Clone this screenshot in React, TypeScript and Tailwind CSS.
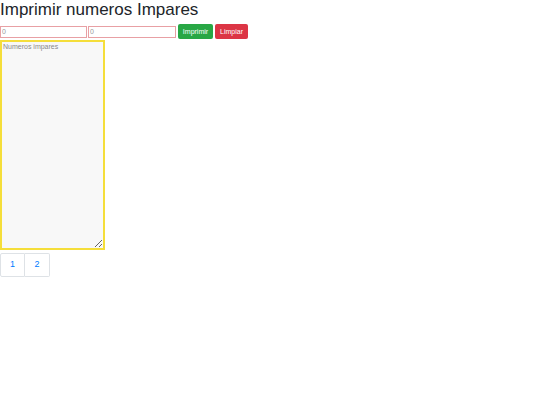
export default function App() {
  return (
    <div className="bg-white min-h-[405px] text-[#212529]" style={{ fontFamily: '"Liberation Sans", Arial, sans-serif' }}>
      <h1 className="text-[17px] leading-[20px] font-normal m-0 mb-[4px]">Imprimir numeros Impares</h1>
      <div className="flex items-center h-[15px]">
        <input
          placeholder="0"
          className="w-[87px] h-[12px] border border-[#e8a0a4] bg-white text-[7px] px-[1px] outline-none placeholder:text-[#999]"
        />
        <input
          placeholder="0"
          className="ml-[1px] w-[88px] h-[12px] border border-[#e8a0a4] bg-white text-[7px] px-[1px] outline-none placeholder:text-[#999]"
        />
        <button className="ml-[2px] w-[35px] h-[15px] rounded-[2px] bg-[#28a745] text-white text-[7px] leading-none">Imprimir</button>
        <button className="ml-[2px] w-[33px] h-[15px] rounded-[2px] bg-[#dc3545] text-white text-[7px] leading-none">Limpiar</button>
      </div>
      <textarea
        placeholder="Numeros impares"
        className="block mt-[1px] w-[105px] h-[210px] border-2 border-[#f5de3a] bg-[#f8f8f8] text-[7px] px-[1px] py-0 outline-none placeholder:text-[#888] resize"
      />
      <div className="flex mt-[3px]">
        <div className="w-[25px] h-[24px] flex items-center justify-center border border-[#dee2e6] rounded-l-[2px] text-[#007bff] text-[9px]">1</div>
        <div className="w-[25px] h-[24px] flex items-center justify-center border border-l-0 border-[#dee2e6] rounded-r-[2px] text-[#007bff] text-[9px]">2</div>
      </div>
    </div>
  );
}
